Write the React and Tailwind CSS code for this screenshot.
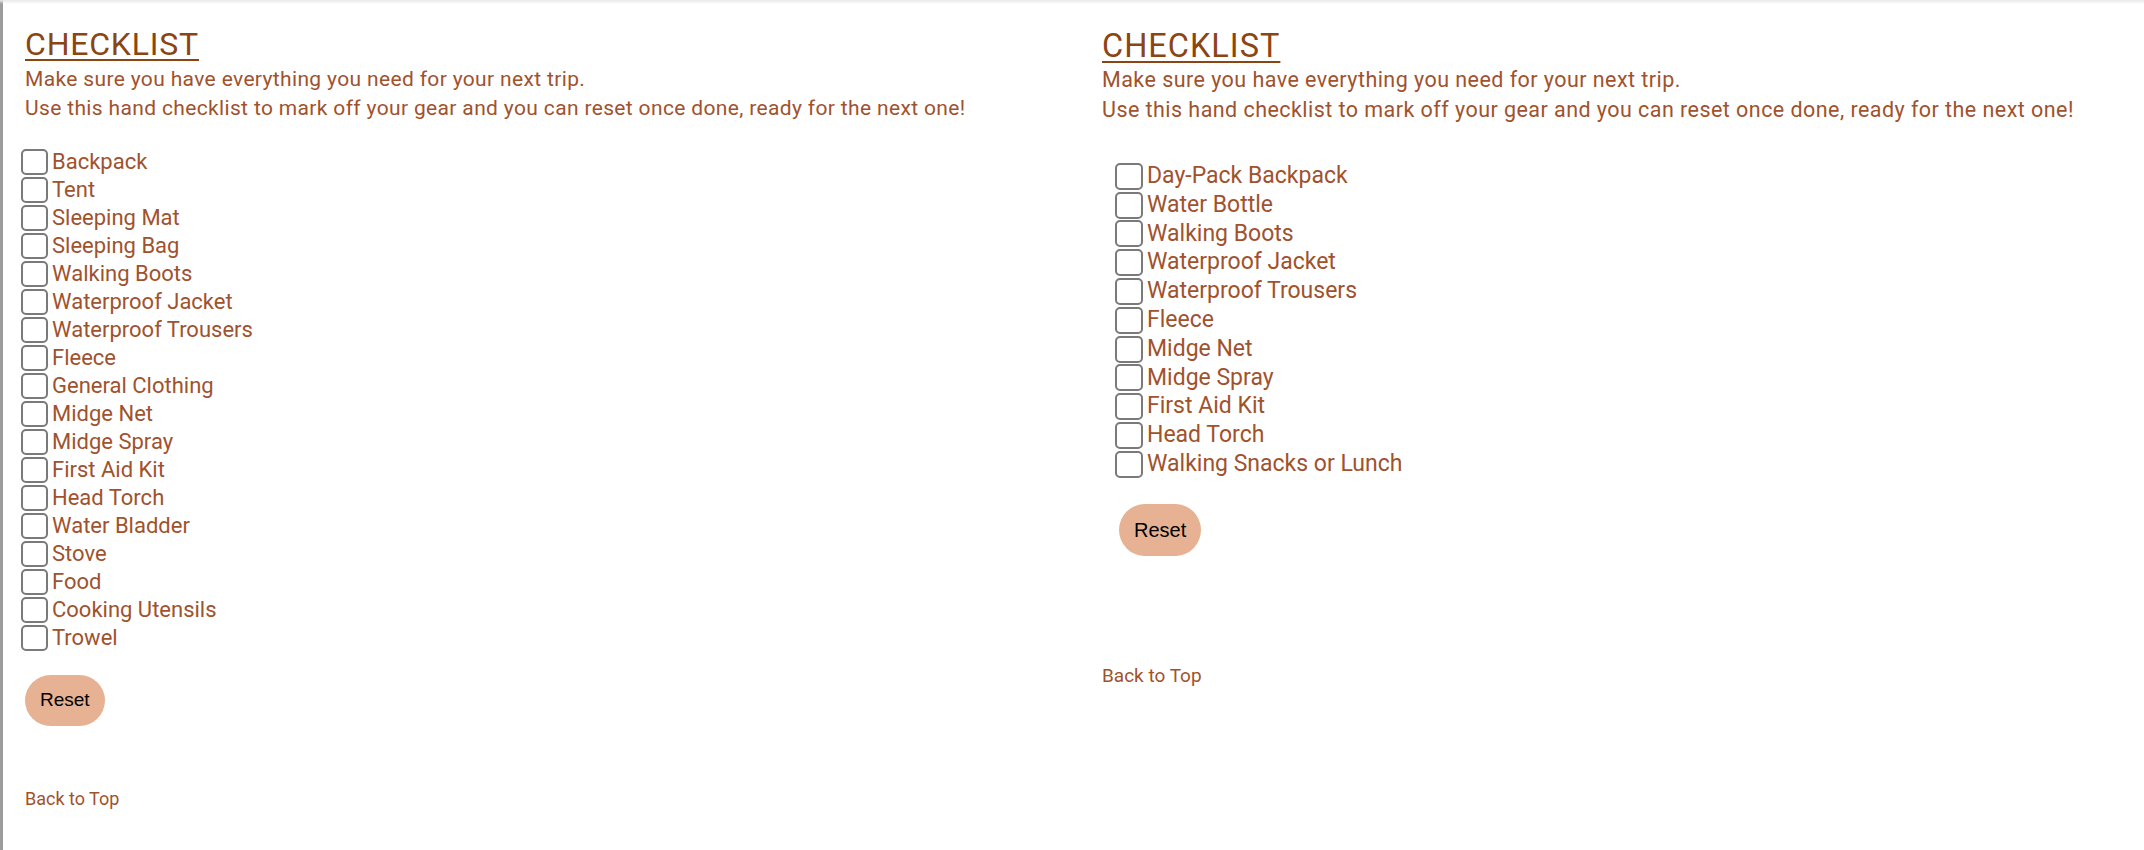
import React, { useState } from "react";

const LEFT_ITEMS = [
  "Backpack",
  "Tent",
  "Sleeping Mat",
  "Sleeping Bag",
  "Walking Boots",
  "Waterproof Jacket",
  "Waterproof Trousers",
  "Fleece",
  "General Clothing",
  "Midge Net",
  "Midge Spray",
  "First Aid Kit",
  "Head Torch",
  "Water Bladder",
  "Stove",
  "Food",
  "Cooking Utensils",
  "Trowel",
];

const RIGHT_ITEMS = [
  "Day-Pack Backpack",
  "Water Bottle",
  "Walking Boots",
  "Waterproof Jacket",
  "Waterproof Trousers",
  "Fleece",
  "Midge Net",
  "Midge Spray",
  "First Aid Kit",
  "Head Torch",
  "Walking Snacks or Lunch",
];

function useChecks(n) {
  const [checks, setChecks] = useState(() => Array(n).fill(false));
  const toggle = (i) =>
    setChecks((c) => c.map((v, j) => (j === i ? !v : v)));
  const reset = () => setChecks(Array(n).fill(false));
  return [checks, toggle, reset];
}

function LeftChecklist() {
  const [checks, toggle, reset] = useChecks(LEFT_ITEMS.length);
  return (
    <section className="w-[1072px] shrink-0 border-l-[3px] border-[#9c9c9c] pl-[22px] pt-[26px]">
      <h2 className="text-[32px] leading-[36px] tracking-[0.8px] text-[#8b4513] underline decoration-[2px] underline-offset-[4px]">
        CHECKLIST
      </h2>
      <p className="mt-[3px] text-[21px] leading-[29px] tracking-[0.35px] text-[#a0522d]">
        Make sure you have everything you need for your next trip.
        <br />
        Use this hand checklist to mark off your gear and you can reset once
        done, ready for the next one!
      </p>
      <ul className="mt-[25px] -ml-[4px] flex flex-col">
        {LEFT_ITEMS.map((item, i) => (
          <li key={item} className="flex h-[28px] items-center gap-[4px]">
            <input
              type="checkbox"
              checked={checks[i]}
              onChange={() => toggle(i)}
              className="h-[26px] w-[27px] shrink-0 appearance-none rounded-[5px] border-2 border-[#7a7a7a] bg-white checked:bg-[#a0522d]"
            />
            <span className="text-[22px] leading-[28px] text-[#a0522d]">
              {item}
            </span>
          </li>
        ))}
      </ul>
      <button
        onClick={reset}
        className="mt-[23px] flex h-[51px] items-center rounded-full bg-[#e6b293] px-[15px] text-[19px] text-black"
        style={{ fontFamily: '"Liberation Sans", Arial, sans-serif' }}
      >
        Reset
      </button>
      <a
        href="#top"
        className="mt-[61px] block text-[18px] leading-[24px] text-[#a0522d]"
      >
        Back to Top
      </a>
    </section>
  );
}

function RightChecklist() {
  const [checks, toggle, reset] = useChecks(RIGHT_ITEMS.length);
  return (
    <section className="w-[1072px] shrink-0 pl-[30px] pt-[28px]">
      <h2 className="text-[32.5px] leading-[36px] tracking-[1px] text-[#8b4513] underline decoration-[2px] underline-offset-[4px]">
        CHECKLIST
      </h2>
      <p className="mt-[1px] text-[21.5px] leading-[30px] tracking-[0.45px] text-[#a0522d]">
        Make sure you have everything you need for your next trip.
        <br />
        Use this hand checklist to mark off your gear and you can reset once
        done, ready for the next one!
      </p>
      <ul className="mt-[37px] ml-[13px] flex flex-col">
        {RIGHT_ITEMS.map((item, i) => (
          <li key={item} className="flex h-[28.8px] items-center gap-[4px]">
            <input
              type="checkbox"
              checked={checks[i]}
              onChange={() => toggle(i)}
              className="h-[27px] w-[28px] shrink-0 appearance-none rounded-[5px] border-2 border-[#7a7a7a] bg-white checked:bg-[#a0522d]"
            />
            <span className="text-[23px] leading-[28.8px] text-[#a0522d]">
              {item}
            </span>
          </li>
        ))}
      </ul>
      <button
        onClick={reset}
        className="mt-[25px] ml-[17px] flex h-[52px] items-center rounded-full bg-[#e6b293] px-[15px] text-[20px] text-black"
        style={{ fontFamily: '"Liberation Sans", Arial, sans-serif' }}
      >
        Reset
      </button>
      <a
        href="#top"
        className="mt-[108px] block text-[19px] leading-[24px] text-[#a0522d]"
      >
        Back to Top
      </a>
    </section>
  );
}

export default function App() {
  return (
    <div
      id="top"
      className="relative flex min-h-[850px] w-full bg-white"
      style={{ fontFamily: 'Roboto, "Noto Sans", sans-serif' }}
    >
      <div className="pointer-events-none absolute inset-x-0 top-0 h-[4px] bg-gradient-to-b from-[#e9e9e9] to-transparent" />
      <LeftChecklist />
      <RightChecklist />
    </div>
  );
}
